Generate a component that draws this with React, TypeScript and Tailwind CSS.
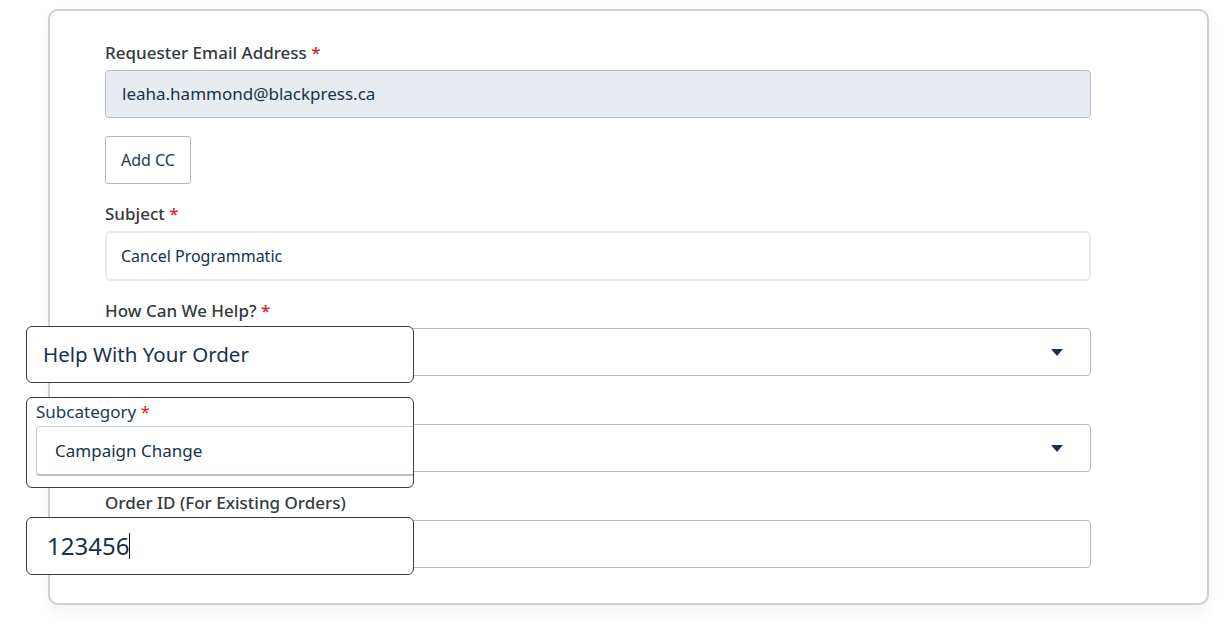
import { type ReactNode } from 'react'

const FONT = { fontFamily: '"Noto Sans", "Open Sans", sans-serif' }

function Label({ children, required }: { children: ReactNode; required?: boolean }) {
  return (
    <div className="h-5 mb-[7px] text-[17px] leading-5 font-medium text-[#333a40]">
      {children}
      {required && <span className="text-[#d3242b]"> *</span>}
    </div>
  )
}

function Caret() {
  return (
    <svg width="12" height="7" viewBox="0 0 12 7" className="shrink-0">
      <path d="M0 0h12L6 7z" fill="#163350" />
    </svg>
  )
}

function Field({ label, required, className, children }: { label: string; required?: boolean; className?: string; children: ReactNode }) {
  return (
    <div className={className}>
      <Label required={required}>{label}</Label>
      {children}
    </div>
  )
}

export default function App() {
  return (
    <div className="relative w-[1225px] h-[629px] bg-white overflow-hidden pl-[48px] pt-[9px]" style={FONT}>
      {/* card */}
      <div className="w-[1161px] h-[596px] rounded-[10px] border-2 border-[#cfcfcf] bg-white shadow-[0_6px_14px_rgba(0,0,0,0.06)] pl-[55px] pt-[32px]">
        <div className="w-[986px] flex flex-col">
          <div className="flex flex-col gap-[18px]">
            <Field label="Requester Email Address" required>
              <div className="h-12 rounded-[4px] border border-[#b3c1ce] bg-[#e8ebef] px-4 flex items-center text-[17px] text-[#17324d]">
                leaha.hammond@blackpress.ca
              </div>
            </Field>
            <button className="h-12 w-[86px] rounded-[3px] border border-[#a9b8c7] bg-white text-[16px] text-[#1c3a57]">
              Add CC
            </button>
          </div>

          <Field label="Subject" required className="mt-5">
            <div className="h-[50px] rounded-[5px] border-2 border-[#e9eef4] bg-white px-[14px] flex items-center text-[16px] text-[#17324d]">
              Cancel Programmatic
            </div>
          </Field>

          <Field label="How Can We Help?" required className="mt-5">
            <div className="h-12 rounded-[4px] border border-[#adbcca] bg-white flex items-center justify-end pr-[27px]">
              <Caret />
            </div>
          </Field>

          <Field label="Subcategory" required className="mt-[21px]">
            <div className="h-12 rounded-[4px] border border-[#adbcca] bg-white flex items-center justify-end pr-[27px]">
              <Caret />
            </div>
          </Field>

          <Field label="Order ID (For Existing Orders)" className="mt-[21px]">
            <div className="h-12 rounded-[4px] border border-[#adbcca] bg-white" />
          </Field>
        </div>
      </div>

      {/* floating field previews over the form */}
      <div className="absolute left-[26px] top-[326px] w-[388px] h-[57px] rounded-[6px] border border-[#3b3d40] bg-white flex items-center pl-4 text-[20.5px] text-[#17324d]">
        Help With Your Order
      </div>

      <div className="absolute left-[26px] top-[397px] w-[388px] h-[91px] rounded-[6px] border border-[#3b3d40] bg-white overflow-hidden pl-[9px] pt-[4px]">
        <div className="text-[17px] leading-5 text-[#1c3a57]">
          Subcategory<span className="text-[#d3242b]"> *</span>
        </div>
        <div className="mt-[4px] h-[50px] rounded-l-[4px] border border-r-0 border-[#c6d0da] border-b-2 border-b-[#b3bfcb] flex items-center pl-[18px] text-[17px] text-[#17324d]">
          Campaign Change
        </div>
      </div>

      <div className="absolute left-[26px] top-[517px] w-[388px] h-[58px] rounded-[6px] border border-[#3b3d40] bg-white flex items-center pl-[20px] text-[24px] text-[#17324d]">
        123456
        <span className="inline-block w-px h-[26px] bg-[#111]" />
      </div>
    </div>
  )
}
